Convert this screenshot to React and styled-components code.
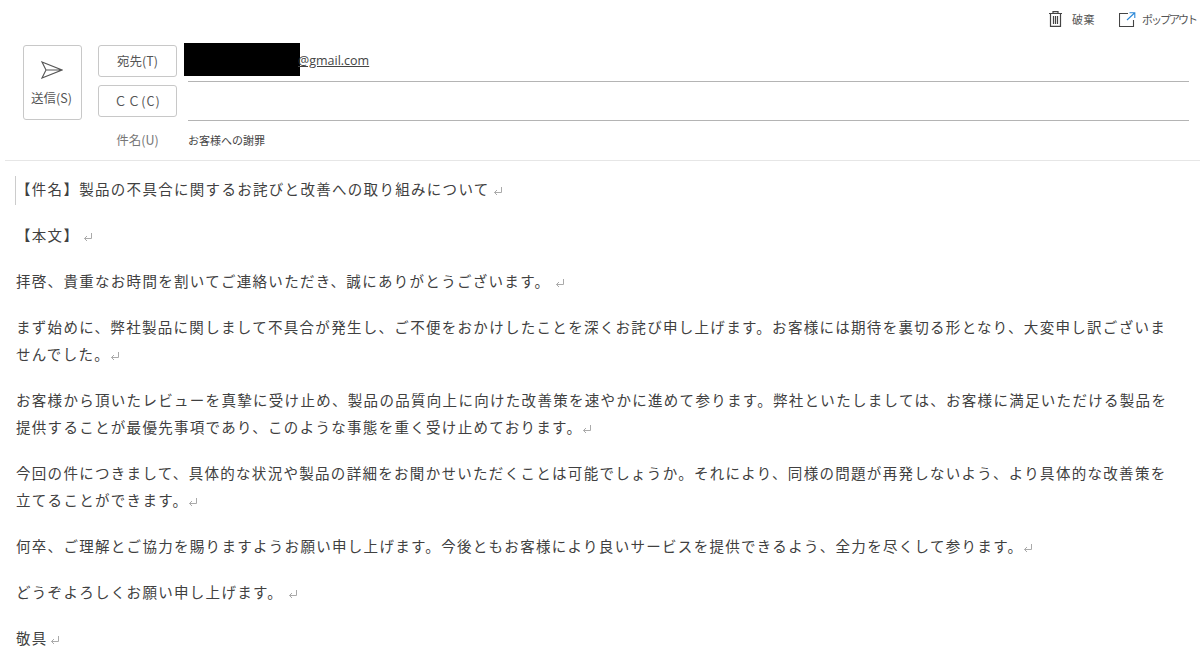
import React from 'react'
import styled, { createGlobalStyle } from 'styled-components'

const GlobalStyle = createGlobalStyle`
  html, body {
    margin: 0;
    padding: 0;
    background: #fff;
    overflow: hidden;
  }
  body {
    font-family: "Noto Sans CJK JP", "Liberation Sans", sans-serif;
    color: #333;
  }
`

const Page = styled.div`
  width: 1200px;
  height: 665px;
  overflow: hidden;
`

const TopBar = styled.div`
  height: 38px;
  display: flex;
  justify-content: flex-end;
  align-items: center;
  gap: 24px;
  padding-right: 4px;
`

const TopAction = styled.button`
  display: flex;
  align-items: center;
  gap: ${(p) => p.$gap}px;
  border: none;
  background: none;
  padding: 0;
  font-family: inherit;
  font-size: 11px;
  letter-spacing: ${(p) => p.$spacing || 0}px;
  color: #555;
`

const Header = styled.div`
  display: flex;
  box-sizing: border-box;
  height: 123px;
  margin-left: 5px;
  padding: 7px 11px 0 18px;
  border-bottom: 1px solid #e6e6e6;
`

const SendButton = styled.button`
  width: 59px;
  height: 75px;
  box-sizing: border-box;
  border: 1px solid #c8c8c8;
  border-radius: 3px;
  background: #fff;
  padding: 15px 2px 0 0;
  display: flex;
  flex-direction: column;
  align-items: center;
  gap: 11px;
  font-family: inherit;
  font-size: 12.5px;
  line-height: 16px;
  color: #555;
`

const Fields = styled.div`
  flex: 1;
  margin-left: 16px;
  display: grid;
  grid-template-columns: 79px 1fr;
  grid-template-rows: 40px 39px 33px;
  column-gap: 11px;
`

const FieldButton = styled.button`
  width: 79px;
  height: 32px;
  box-sizing: border-box;
  border: 1px solid #c8c8c8;
  border-radius: 3px;
  background: #fff;
  padding: 0 0 2px;
  font-family: inherit;
  font-size: 12.5px;
  letter-spacing: ${(p) => p.$spacing || 0}px;
  color: #555;
`

const FieldInput = styled.div`
  height: ${(p) => p.$height}px;
  border-bottom: 1px solid #b4b4b4;
  display: flex;
  align-items: flex-start;
`

const Redacted = styled.span`
  width: 116px;
  height: 33px;
  margin: -2px 0 0 -4px;
  background: #000;
  flex: none;
`

const Address = styled.span`
  font-family: "Open Sans", "Liberation Sans", sans-serif;
  font-size: 12.5px;
  line-height: 18px;
  margin: 7px 0 0 -2px;
  text-decoration: underline;
  color: #444;
`

const SubjectLabel = styled.div`
  text-align: center;
  font-size: 12.5px;
  line-height: 16px;
  padding-top: 8px;
  color: #777;
`

const SubjectValue = styled.div`
  font-size: 11px;
  line-height: 16px;
  padding-top: 8px;
  color: #444;
`

const Body = styled.div`
  position: relative;
  padding: 14px 0 0 16px;
  width: 1160px;
  font-size: 14.5px;
  letter-spacing: 1.3px;
  line-height: 27px;
  color: #404040;
`

const Caret = styled.span`
  position: absolute;
  left: 15px;
  top: 15px;
  width: 1px;
  height: 29px;
  background: #ccc;
`

const Para = styled.p`
  margin: 0 0 19px;
`

const ReturnSvg = styled.svg`
  display: inline-block;
  width: 10px;
  height: 10px;
  margin-left: ${(p) => p.$gap}px;
  vertical-align: -1px;
`

const ReturnMark = ({ gap }) => (
  <ReturnSvg $gap={gap} viewBox="0 0 10 10" fill="none" stroke="#aaa" strokeWidth="1">
    <path d="M8.5 1v5.5H1.5M4 4L1.5 6.5 4 9" />
  </ReturnSvg>
)

const TrashIcon = () => (
  <svg width="13" height="16" viewBox="0 0 13 16" fill="none" stroke="#444" strokeWidth="1.2">
    <path d="M0 2.5h13M4 2.5V.6h5v1.9M1.5 2.5v12.9h10V2.5M4.5 5v8M6.5 5v8M8.5 5v8" />
  </svg>
)

const PopoutIcon = () => (
  <svg width="17" height="15" viewBox="0 0 17 15" fill="none" strokeWidth="1.1">
    <path d="M9 1.5H0.5v13h14V8" stroke="#444" />
    <path d="M8 8l7.5-7M10.5 0.7h5.3V6" stroke="#2b88d8" />
  </svg>
)

const SendIcon = () => (
  <svg width="22" height="18" viewBox="0 0 22 18" fill="none" stroke="#555" strokeWidth="1.1">
    <path d="M1 1l20 8-20 8 4-8zM5 9h16" />
  </svg>
)

const paragraphs = [
  { text: '【件名】製品の不具合に関するお詫びと改善への取り組みについて', gap: 3 },
  { text: '【本文】', gap: 4 },
  { text: '拝啓、貴重なお時間を割いてご連絡いただき、誠にありがとうございます。', gap: 5 },
  {
    text: 'まず始めに、弊社製品に関しまして不具合が発生し、ご不便をおかけしたことを深くお詫び申し上げます。お客様には期待を裏切る形となり、大変申し訳ございませんでした。',
    gap: 0,
  },
  {
    text: 'お客様から頂いたレビューを真摯に受け止め、製品の品質向上に向けた改善策を速やかに進めて参ります。弊社といたしましては、お客様に満足いただける製品を提供することが最優先事項であり、このような事態を重く受け止めております。',
    gap: 0,
  },
  {
    text: '今回の件につきまして、具体的な状況や製品の詳細をお聞かせいただくことは可能でしょうか。それにより、同様の問題が再発しないよう、より具体的な改善策を立てることができます。',
    gap: 0,
  },
  {
    text: '何卒、ご理解とご協力を賜りますようお願い申し上げます。今後ともお客様により良いサービスを提供できるよう、全力を尽くして参ります。',
    gap: 0,
  },
  { text: 'どうぞよろしくお願い申し上げます。', gap: 5 },
  { text: '敬具', gap: 2 },
]

const App = () => (
  <Page>
    <GlobalStyle />
    <TopBar>
      <TopAction $gap={10} $spacing={0.5}>
        <TrashIcon />
        破棄
      </TopAction>
      <TopAction $gap={6} $spacing={-2}>
        <PopoutIcon />
        ポップアウト
      </TopAction>
    </TopBar>
    <Header>
      <SendButton>
        <SendIcon />
        送信(S)
      </SendButton>
      <Fields>
        <FieldButton>宛先(T)</FieldButton>
        <FieldInput $height={36}>
          <Redacted />
          <Address>@gmail.com</Address>
        </FieldInput>
        <FieldButton $spacing={1}>ＣＣ(C)</FieldButton>
        <FieldInput $height={35} />
        <SubjectLabel>件名(U)</SubjectLabel>
        <SubjectValue>お客様への謝罪</SubjectValue>
      </Fields>
    </Header>
    <Body>
      <Caret />
      {paragraphs.map((p) => (
        <Para key={p.text}>
          {p.text}
          <ReturnMark gap={p.gap} />
        </Para>
      ))}
    </Body>
  </Page>
)

export default App
